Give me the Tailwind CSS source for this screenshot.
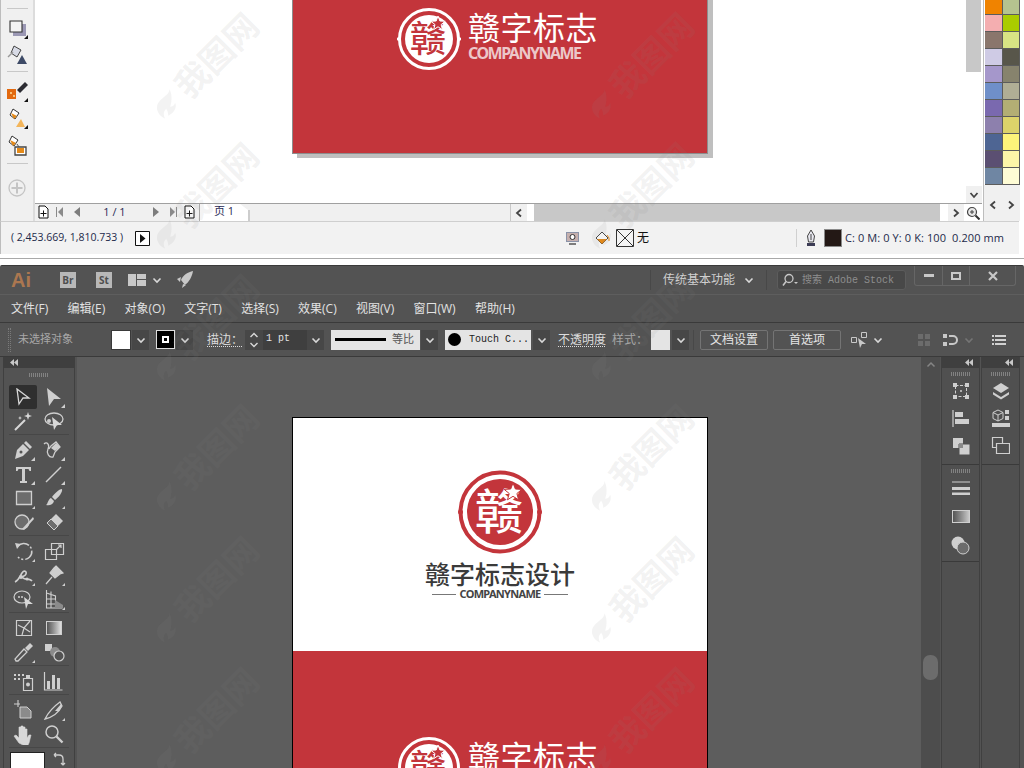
<!DOCTYPE html>
<html>
<head>
<meta charset="utf-8">
<script src="https://cdn.jsdelivr.net/npm/@tailwindcss/browser@4"></script>
</head>
<body class="w-[1024px] h-[768px] overflow-hidden bg-white relative font-['Open_Sans','Noto_Sans_CJK_SC',sans-serif]">

<!-- CorelDRAW window -->
<div class="h-[259px] border-b border-[#a8a8a8] flex flex-col">
  <div class="h-[221px] flex">
    <!-- left toolbox -->
    <div class="w-[35px] shrink-0 bg-[#f0f0f0] border-l border-[#bdbdbd] border-r-2 border-r-[#dcdcdc] flex flex-col items-center">
      <div class="w-[21px] h-[9px] border-b border-[#c8c8c8]"></div>
      <svg class="w-6 h-6 mt-[7px]" viewBox="0 0 24 24"><path d="M8 8h13v12H8z" fill="#9b98b4"/><path d="M5 5h12v11H5z" fill="#f4f4f4" stroke="#333" stroke-width="1.100"/><path d="M23 19v4h-4z" fill="#111"/></svg>
      <svg class="w-6 h-6 mt-[3px]" viewBox="0 0 24 24"><path d="M9 3l7 4-4 7-6-4z" fill="#d8dbe6" stroke="#444"/><path d="M3 14l5-5" stroke="#999" stroke-width="1.500"/><path d="M17 12l5 9H12z" fill="#3d4a66"/></svg>
      <div class="w-[21px] h-[5px] border-b border-[#c8c8c8]"></div>
      <svg class="w-6 h-6 mt-[7px]" viewBox="0 0 24 24"><path d="M2 10h9v10H2z" fill="#e2690f"/><path d="M5 13h2v2H5zM8 16h2v2H8z" fill="#f8c27a"/><path d="M12 11l8-8 3 3-8 8z" fill="#2c2c33"/><path d="M23 19v4h-4z" fill="#111"/></svg>
      <svg class="w-6 h-6 mt-[3px]" viewBox="0 0 24 24"><path d="M8 3l6 4-4 6-5-4z" fill="#fff" stroke="#333"/><path d="M6 7l6 3-3 3z" fill="#e58a18"/><path d="M16 13l4 8H11z" fill="#f3b55a"/><path d="M23 19v4h-4z" fill="#111"/></svg>
      <svg class="w-6 h-6 mt-[4px]" viewBox="0 0 24 24"><path d="M7 2l6 4-4 6-5-4z" fill="#fff" stroke="#333"/><path d="M5 6l6 3-3 3z" fill="#e58a18"/><path d="M10 13h11v8H10z" fill="#fff" stroke="#444" stroke-width="1.300"/><path d="M12 14h7v5h-7z" fill="#e58a18"/><path d="M12 10l2 3" stroke="#555"/></svg>
      <div class="w-[21px] h-[6px] border-b border-[#c8c8c8]"></div>
      <svg class="w-[18px] h-[18px] mt-[15px]" viewBox="0 0 18 18"><circle cx="9" cy="9" r="8" fill="none" stroke="#c4c4c4" stroke-width="1.300"/><path d="M9 3.500v11M3.500 9h11" stroke="#c4c4c4" stroke-width="2"/></svg>
    </div>
    <div class="flex-1 flex flex-col">
      <div class="h-[186px] flex">
        <!-- canvas -->
        <div class="flex-1 bg-white">
          <div class="ml-[257px] w-[416px] h-[154px] shadow-[5px_4px_0_#bfbfbf,5px_0_0_#bfbfbf] bg-[#c3353b] border border-[#8d8d8d] border-t-0 pt-[7px] pl-[104px] flex items-start gap-[7px]">
            <svg class="w-[64px] h-[64px] shrink-0" viewBox="0 0 64 64"><circle cx="32" cy="32" r="29.500" fill="none" stroke="#fff" stroke-width="3"/><circle cx="32" cy="32" r="24" fill="#fff"/><text x="31" y="45" text-anchor="middle" font-size="36" font-weight="500" fill="#c3353b" font-family="Noto Sans CJK SC">赣</text><path d="M41 9l1.900 5 5.300.3-4.100 3.300 1.400 5.100-4.500-2.900-4.400 2.900 1.400-5.100-4.100-3.300 5.300-.3z" fill="#c3353b" stroke="#fff" stroke-width="1"/><circle cx="1.600" cy="32" r="1.800" fill="#fff"/><circle cx="62.400" cy="32" r="1.800" fill="#fff"/></svg>
            <div class="flex flex-col">
              <div class="text-[32px] leading-[36px] text-white tracking-[0.5px] font-['Noto_Sans_CJK_SC',sans-serif] mt-[1px]">赣字标志</div>
              <div class="text-[16px] leading-[17px] font-bold text-[#ecc7c9] tracking-[-1.500px] font-['Noto_Sans',sans-serif] mt-[1px] whitespace-nowrap">COMPANYNAME</div>
            </div>
          </div>
        </div>
        <!-- vertical scroller -->
        <div class="w-[16px] flex flex-col bg-white">
          <div class="w-[15px] h-[72px] bg-[#c8c8c8]"></div>
        </div>
      </div>
      <div class="h-[17px] flex justify-end">
        <div class="w-[16px] bg-[#f0f0f0] text-[#444] flex items-center justify-center"><svg class="w-2.5 h-2.5" viewBox="0 0 10 10"><path d="M1.500 3l3.500 4 3.500-4" fill="none" stroke="currentColor" stroke-width="1.800"/></svg></div>
      </div>
      <!-- page tabs and horizontal scroller -->
      <div class="h-[18px] flex bg-[#f0f0f0] border-t border-[#a0a0a0] text-[#555]">
        <svg class="w-[13px] h-[14px] ml-[2px] mt-[1px]" viewBox="0 0 13 14"><path d="M2 1h6l3 3v9H2z" fill="#fff" stroke="#111"/><path d="M6.500 5.500v6M3.500 8.500h6" stroke="#111"/></svg>
        <svg class="w-[10px] h-[12px] ml-[5px] mt-[2px]" viewBox="0 0 10 12"><path d="M1.500 1v10" stroke="#8a8a8a"/><path d="M8 1v10L3 6z" fill="#8a8a8a"/></svg>
        <svg class="w-[8px] h-[12px] ml-[8px] mt-[2px]" viewBox="0 0 8 12"><path d="M7 1v10L1 6z" fill="#7d7d7d"/></svg>
        <div class="w-[61px] text-center text-[11px] leading-[16px] text-[#2a2a55] ml-[3px]">1 / 1</div>
        <svg class="w-[8px] h-[12px] ml-[7px] mt-[2px]" viewBox="0 0 8 12"><path d="M1 1v10l6-5z" fill="#7d7d7d"/></svg>
        <svg class="w-[10px] h-[12px] ml-[8px] mt-[2px]" viewBox="0 0 10 12"><path d="M8.500 1v10" stroke="#8a8a8a"/><path d="M2 1v10l5-5z" fill="#8a8a8a"/></svg>
        <svg class="w-[13px] h-[14px] ml-[5px] mt-[1px]" viewBox="0 0 13 14"><path d="M2 1h6l3 3v9H2z" fill="#fff" stroke="#111"/><path d="M6.500 5.500v6M3.500 8.500h6" stroke="#111"/></svg>
        <div class="relative w-[49px] h-[17px] ml-[3px] bg-white border-l border-[#aaa] text-[11px] leading-[14px] text-[#2a2a55] pl-[14px] [clip-path:polygon(0_0,84%_0,100%_35%,100%_100%,0_100%)]">页 1</div>
        <svg class="w-[2px] h-[17px]" viewBox="0 0 2 17"><path d="M1 6v11" stroke="#aaa"/></svg>
        <div class="flex-1"></div>
        <div class="w-[17px] flex items-center justify-center border-l border-[#c8c8c8] text-[#444]"><svg class="w-2.5 h-2.5" viewBox="0 0 10 10"><path d="M7 1.500L3 5l4 3.500" fill="none" stroke="currentColor" stroke-width="1.800"/></svg></div>
        <div class="w-[7px] bg-white"></div>
        <div class="w-[406px] bg-[#c8c8c8]"></div>
        <div class="w-[8px] bg-white"></div>
        <div class="w-[16px] flex items-center justify-center text-[#444]"><svg class="w-2.5 h-2.5" viewBox="0 0 10 10"><path d="M3 1.500L7 5 3 8.500" fill="none" stroke="currentColor" stroke-width="1.800"/></svg></div>
        <div class="w-[18px] bg-white flex items-center justify-center"><svg class="w-[14px] h-[14px]" viewBox="0 0 14 14"><circle cx="6" cy="6" r="4.500" fill="#e8e8e8" stroke="#444" stroke-width="1.200"/><path d="M4 6h4M6 4v4" stroke="#444"/><path d="M9.500 9.500l4 4" stroke="#333" stroke-width="2"/></svg></div>
      </div>
    </div>
    <!-- colour palette -->
    <div class="w-[41px] shrink-0 bg-white border-l border-[#bdbdbd] ml-[1px] flex flex-col">
      <div class="pl-[1px] pt-0">
        <div class="w-[35px] grid grid-cols-2 gap-px bg-[#5c5c5c] border-r border-b border-[#5c5c5c]">
          <div class="h-[14px] bg-[#f08300]"></div><div class="h-[14px] bg-[#b5c38f]"></div>
          <div class="h-4 bg-[#f4aeb0]"></div><div class="h-4 bg-[#aacc00]"></div>
          <div class="h-4 bg-[#8a766c]"></div><div class="h-4 bg-[#d8e484]"></div>
          <div class="h-4 bg-[#cfcbe5]"></div><div class="h-4 bg-[#58564a]"></div>
          <div class="h-4 bg-[#a597cb]"></div><div class="h-4 bg-[#87836d]"></div>
          <div class="h-4 bg-[#6f8fc9]"></div><div class="h-4 bg-[#b0ae95]"></div>
          <div class="h-4 bg-[#7a69af]"></div><div class="h-4 bg-[#b3ae74]"></div>
          <div class="h-4 bg-[#8d80ad]"></div><div class="h-4 bg-[#dcd36a]"></div>
          <div class="h-4 bg-[#4e6593]"></div><div class="h-4 bg-[#fdf47a]"></div>
          <div class="h-4 bg-[#5b4f72]"></div><div class="h-4 bg-[#fdf6a8]"></div>
          <div class="h-4 bg-[#6f86a3]"></div><div class="h-4 bg-[#fefcd5]"></div>
        </div>
      </div>
      <div class="w-[36px] flex-1 bg-[#f0f0f0] flex items-start justify-between px-[4px] pt-[15px] text-[#444]">
        <svg class="w-2.5 h-2.5" viewBox="0 0 10 10"><path d="M7 1.500L3 5l4 3.500" fill="none" stroke="currentColor" stroke-width="1.800"/></svg>
        <svg class="w-2.5 h-2.5" viewBox="0 0 10 10"><path d="M3 1.500L7 5 3 8.500" fill="none" stroke="currentColor" stroke-width="1.800"/></svg>
      </div>
    </div>
  </div>
  <!-- status bar -->
  <div class="h-[33px] w-[1019px] bg-[#f2f2f2] border-t border-[#cfcfcf] border-l border-l-[#bdbdbd] flex items-center text-[11px] text-[#1d2a4a]">
    <div class="w-[123px] ml-[10px] whitespace-nowrap text-[10.5px]">( 2,453.669, 1,810.733 )</div>
    <svg class="w-[15px] h-[15px] ml-[1px]" viewBox="0 0 15 15"><path d="M.500.500h14v14H.500z" fill="#fff" stroke="#111"/><path d="M5 3v9l5.500-4.500z" fill="#111"/></svg>
    <svg class="w-[15px] h-[15px] ml-[415px]" viewBox="0 0 15 15"><path d="M1 1h13v10H1z" fill="#8b93a8"/><path d="M2 2h11v8H2z" fill="#c6b0ae"/><circle cx="7.500" cy="6" r="2.500" fill="#fff" stroke="#333"/><path d="M4 13h7" stroke="#555" stroke-width="1.500"/></svg>
    <svg class="w-4 h-4 ml-[14px]" viewBox="0 0 16 16"><path d="M8 2l6 6-6 6-6-6z" fill="#fff" stroke="#444"/><path d="M3 9h10l-5 5z" fill="#e58a18"/><path d="M13 5l2 3v3" fill="none" stroke="#e58a18"/></svg>
    <svg class="w-[18px] h-[18px] ml-[6px]" viewBox="0 0 18 18"><path d="M.500.500h17v17H.500z" fill="#f4f4f4" stroke="#333"/><path d="M1 1l16 16M17 1L1 17" stroke="#333"/></svg>
    <div class="ml-[3px] text-[#111] text-[12px] w-[159px]">无</div>
    <div class="w-px h-[18px] bg-[#d0d0d0]"></div>
    <svg class="w-4 h-[18px] ml-[6px]" viewBox="0 0 16 18"><path d="M8 1l3.500 6-1 6h-5l-1-6z" fill="#e8e8f0" stroke="#444"/><path d="M8 5v6" stroke="#444"/><path d="M4 14h8v3H4z" fill="#3c3c55"/></svg>
    <div class="w-[18px] h-[18px] bg-[#231815] border border-[#8a8a8a] ml-[5px]"></div>
    <div class="ml-[3px] whitespace-nowrap text-[11px] tracking-[0.1px]">C: 0 M: 0 Y: 0 K: 100&nbsp; 0.200 mm</div>
  </div>
</div>

<!-- Illustrator window -->
<div class="mt-[6px] h-[503px] bg-[#535353] flex flex-col border-t border-[#3a3a3a] rounded-t-[2px] text-[#dcdcdc]">
  <div class="h-[28px] flex items-center">
    <div class="w-[22px] ml-[11px] text-[20px] leading-none font-bold text-[#ab7750] font-['Liberation_Sans',sans-serif]">Ai</div>
    <div class="w-4 h-4 ml-[27px] bg-[#b8b8b8] text-[#4e4e4e] text-[10px] leading-4 font-bold text-center">Br</div>
    <div class="w-4 h-4 ml-[20px] bg-[#b8b8b8] text-[#4e4e4e] text-[10px] leading-4 font-bold text-center">St</div>
    <svg class="w-[18px] h-[12px] ml-[16px]" viewBox="0 0 18 12"><path d="M0 0h8v12H0zM9 0h9v5H9zM9 6h9v6H9z" fill="#c8c8c8"/></svg>
    <svg class="w-2.5 h-2.5 ml-[6px]" viewBox="0 0 10 10"><path d="M1.500 3.500L5 7l3.500-3.500" fill="none" stroke="#d8d8d8" stroke-width="1.600"/></svg>
    <svg class="w-[18px] h-[18px] ml-[14px]" viewBox="0 0 18 18"><path d="M17 0C12 1 7 4 5 9l4 5c4-3 7-8 8-14zM1 8l4-2-1 5zM6 17l1-4 3 1z" fill="#c8c8c8"/></svg>
    <div class="w-px h-[20px] bg-[#484848] ml-[456px]"></div>
    <div class="ml-[12px] text-[12px] text-[#d0d0d0] w-[73px] whitespace-nowrap">传统基本功能</div>
    <svg class="w-2.5 h-2.5 ml-[8px]" viewBox="0 0 10 10"><path d="M1.500 3.500L5 7l3.500-3.500" fill="none" stroke="#d8d8d8" stroke-width="1.600"/></svg>
    <div class="w-px h-[20px] bg-[#484848] ml-[12px]"></div>
    <div class="w-[129px] h-[20px] ml-[10px] bg-[#484848] border border-[#5c5c5c] rounded-[3px] flex items-center gap-[4px] pl-[4px] text-[10px] text-[#8e8e8e] font-['Liberation_Mono','Noto_Sans_CJK_SC',monospace] whitespace-nowrap">
      <svg class="w-[16px] h-[14px]" viewBox="0 0 16 14"><circle cx="7" cy="5.500" r="4" fill="none" stroke="#c8c8c8" stroke-width="1.300"/><path d="M4 8.500L1 12.500" stroke="#c8c8c8" stroke-width="1.600"/><path d="M12 9h4l-2 2z" fill="#c8c8c8"/></svg>
      搜索 Adobe Stock
    </div>
    <div class="w-[102px] h-[20px] ml-[8px] -mt-[8px] border border-t-0 border-[#666] rounded-b-[3px] flex items-center text-[#c8c8c8]">
      <div class="w-[28px] h-full flex items-center justify-center border-r border-[#666]"><div class="w-[10px] h-[3px] bg-[#c8c8c8]"></div></div>
      <div class="w-[27px] h-full flex items-center justify-center border-r border-[#666]"><div class="w-[10px] h-[8px] border-2 border-[#c8c8c8]"></div></div>
      <div class="flex-1 flex items-center justify-center"><svg class="w-[10px] h-[10px]" viewBox="0 0 10 10"><path d="M1 1l8 8M9 1L1 9" stroke="#c8c8c8" stroke-width="2.200"/></svg></div>
    </div>
  </div>
  <!-- menu bar -->
  <div class="h-[28px] border-t border-[#5e5e5e] flex items-center pl-[11px] gap-[19.250px] text-[12px] text-[#e2e2e2] whitespace-nowrap">
    <span>文件(F)</span><span>编辑(E)</span><span>对象(O)</span><span>文字(T)</span><span>选择(S)</span><span>效果(C)</span><span>视图(V)</span><span>窗口(W)</span><span>帮助(H)</span>
  </div>
  <!-- control bar -->
  <div class="h-[35px] border-y border-[#3a3a3a] flex items-center text-[11px] whitespace-nowrap">
    <div class="w-[3px] h-[24px] ml-[8px] border-x border-dotted border-[#7a7a7a]"></div>
    <div class="ml-[7px] w-[93px] text-[#a8a8a8] text-[11px]">未选择对象</div>
    <div class="w-[20px] h-[20px] bg-white border border-[#3a3a3a]"></div>
    <div class="w-[17px] h-[20px] ml-px bg-[#474747] flex items-center justify-center"><svg class="w-2.5 h-2.5" viewBox="0 0 10 10"><path d="M1.500 3.500L5 7l3.500-3.500" fill="none" stroke="#d8d8d8" stroke-width="1.600"/></svg></div>
    <div class="w-[19px] h-[19px] ml-[7px] bg-black border border-[#ddd] flex items-center justify-center"><div class="w-[3px] h-[3px] border-2 border-white box-content"></div></div>
    <div class="w-[17px] h-[20px] ml-px bg-[#474747] flex items-center justify-center"><svg class="w-2.5 h-2.5" viewBox="0 0 10 10"><path d="M1.500 3.500L5 7l3.500-3.500" fill="none" stroke="#d8d8d8" stroke-width="1.600"/></svg></div>
    <div class="ml-[14px] w-[38px] text-[#dcdcdc] text-[12px] leading-[14px] underline decoration-dotted underline-offset-2">描边：</div>
    <div class="w-[18px] h-[20px] bg-[#474747] flex flex-col items-center justify-center gap-[2px]">
      <svg class="w-2.5 h-[7px]" viewBox="0 0 10 7"><path d="M1.500 5L5 1.500 8.500 5" fill="none" stroke="#d8d8d8" stroke-width="1.400"/></svg>
      <svg class="w-2.5 h-[7px]" viewBox="0 0 10 7"><path d="M1.500 2L5 5.500 8.500 2" fill="none" stroke="#d8d8d8" stroke-width="1.400"/></svg>
    </div>
    <div class="w-[44px] h-[20px] bg-[#3f3f3f] pl-[3px] text-[10px] leading-[18px] text-[#e4e4e4] font-['Liberation_Mono',monospace]">1 pt</div>
    <div class="w-[17px] h-[20px] bg-[#474747] flex items-center justify-center"><svg class="w-2.5 h-2.5" viewBox="0 0 10 10"><path d="M1.500 3.500L5 7l3.500-3.500" fill="none" stroke="#d8d8d8" stroke-width="1.600"/></svg></div>
    <div class="w-[89px] h-[20px] ml-[7px] bg-[#e4e4e4] flex items-center text-[#555] text-[11px]"><div class="w-[51px] h-[3px] ml-[4px] bg-black"></div><span class="ml-[6px]">等比</span></div>
    <div class="w-[17px] h-[20px] ml-px bg-[#474747] flex items-center justify-center"><svg class="w-2.5 h-2.5" viewBox="0 0 10 10"><path d="M1.500 3.500L5 7l3.500-3.500" fill="none" stroke="#d8d8d8" stroke-width="1.600"/></svg></div>
    <div class="w-[86px] h-[20px] ml-[7px] bg-[#e4e4e4] flex items-center text-[#222] text-[10px] font-['Liberation_Mono',monospace]"><div class="w-[13px] h-[13px] ml-[3px] rounded-full bg-black"></div><span class="ml-[8px]">Touch C...</span></div>
    <div class="w-[17px] h-[20px] ml-[2px] bg-[#474747] flex items-center justify-center"><svg class="w-2.5 h-2.5" viewBox="0 0 10 10"><path d="M1.500 3.500L5 7l3.500-3.500" fill="none" stroke="#d8d8d8" stroke-width="1.600"/></svg></div>
    <div class="ml-[8px] w-[48px] text-[#dcdcdc] text-[12px] leading-[14px] underline decoration-dotted underline-offset-2">不透明度</div>
    <div class="ml-[6px] w-[39px] text-[#a8a8a8] text-[12px]">样式：</div>
    <div class="w-[19px] h-[20px] bg-[#e4e4e4]"></div>
    <div class="w-[17px] h-[20px] ml-[2px] bg-[#474747] flex items-center justify-center"><svg class="w-2.5 h-2.5" viewBox="0 0 10 10"><path d="M1.500 3.500L5 7l3.500-3.500" fill="none" stroke="#d8d8d8" stroke-width="1.600"/></svg></div>
    <div class="w-px h-[20px] bg-[#484848] ml-[4px]"></div>
    <div class="w-[68px] h-[20px] ml-[6px] border border-[#747474] rounded-[2px] text-center text-[12px] leading-[18px] text-[#e4e4e4]">文档设置</div>
    <div class="w-[68px] h-[20px] ml-[5px] border border-[#747474] rounded-[2px] text-center text-[12px] leading-[18px] text-[#e4e4e4]">首选项</div>
    <svg class="w-[18px] h-[18px] ml-[9px]" viewBox="0 0 18 18"><path d="M1.500 6.500h5v5h-5zM11.500 1.500h5v5h-5z" fill="none" stroke="#c8c8c8"/><path d="M8 7l8 6h-4l-2 4z" fill="#c8c8c8"/></svg>
    <svg class="w-2.5 h-2.5 ml-[5px]" viewBox="0 0 10 10"><path d="M1.500 3.500L5 7l3.500-3.500" fill="none" stroke="#d8d8d8" stroke-width="1.600"/></svg>
    <svg class="w-[14px] h-[14px] ml-[34px]" viewBox="0 0 14 14"><path d="M1 1h5v5H1zM8 1h5v5H8zM1 8h5v5H1zM8 8h5v5H8z" fill="#6c6c6c"/></svg>
    <svg class="w-[16px] h-[14px] ml-[12px]" viewBox="0 0 16 14"><path d="M0 1h4v4H0zM0 9h4v4H0z" fill="#c8c8c8"/><path d="M6 3h4a4 4 0 0 1 0 8H6" fill="none" stroke="#c8c8c8" stroke-width="2"/></svg>
    <svg class="w-2.5 h-2.5 ml-[5px]" viewBox="0 0 10 10"><path d="M1.500 3.500L5 7l3.500-3.500" fill="none" stroke="#757575" stroke-width="1.600"/></svg>
    <svg class="w-[14px] h-[12px] ml-[18px]" viewBox="0 0 14 12"><path d="M0 1h2v2H0zM0 5h2v2H0zM0 9h2v2H0zM3 1h11v2H3zM3 5h11v2H3zM3 9h11v2H3z" fill="#d0d0d0"/></svg>
  </div>
  <!-- workspace -->
  <div class="flex-1 flex min-h-0">
    <!-- tools -->
    <div class="w-[77px] shrink-0 pl-[3px] bg-[#535353]">
      <div class="w-[72px] h-[11px] bg-[#3f3f3f] flex items-center pl-[7px]"><svg class="w-2 h-[7px]" viewBox="0 0 8 7"><path d="M4 0v7L0 3.500zM8 0v7L4 3.500z" fill="#c8c8c8"/></svg></div>
      <div class="w-[72px] h-[401px] border-x border-[#404040] text-[#cfcfcf] overflow-hidden">
        <div class="w-[20px] h-[4px] mx-auto mt-[5px] mb-[8px] [background:repeating-linear-gradient(90deg,#828282_0_1px,transparent_1px_2px)]"></div>
        <div class="grid grid-cols-2 w-[60px] mx-auto border-b border-[#474747] pb-[1px] mb-[3px] ml-[5px]">
          <div class="h-6 flex items-center justify-center bg-[#2f2f2f] rounded-[2px] w-[28px]"><svg class="w-[18px] h-[18px]" viewBox="0 0 18 18"><path d="M3 1l12 9H9l-4 6z" fill="none" stroke="#d8d8d8" stroke-width="1.300"/></svg></div>
          <div class="h-6 flex items-center justify-center"><svg class="w-[22px] h-[22px]" viewBox="0 0 22 22"><path d="M4 2l14 11h-7l-5 7z" fill="#cfcfcf"/><path d="M22 22v-4l-4 4z" fill="#cfcfcf"/></svg></div>
          <div class="h-6 flex items-center justify-center"><svg class="w-[22px] h-[22px]" viewBox="0 0 22 22"><path d="M2 20L12 10" stroke="#d8d8d8" stroke-width="2"/><path d="M15 2l1 3 3 1-3 1-1 3-1-3-3-1 3-1zM7 6l.6 1.500L9 8l-1.400.6L7 10l-.6-1.400L5 8l1.400-.5z" fill="#d8d8d8"/></svg></div>
          <div class="h-6 flex items-center justify-center"><svg class="w-[22px] h-[22px]" viewBox="0 0 22 22"><ellipse cx="11" cy="9" rx="9" ry="6" fill="none" stroke="#cfcfcf" stroke-width="1.300"/><path d="M9 7l10 8h-5l-3 5z" fill="#d8d8d8"/><circle cx="6" cy="11" r="2" fill="#cfcfcf"/></svg></div>
        </div>
        <div class="grid grid-cols-2 w-[60px] ml-[5px] border-b border-[#474747] pb-[1px] mb-[3px]">
          <div class="h-6 flex items-center justify-center"><svg class="w-[22px] h-[22px]" viewBox="0 0 22 22"><path d="M2 20l2-9 6-6 6 6-6 6z" fill="#cfcfcf"/><path d="M11 4l2-2 6 6-2 2z" fill="#cfcfcf"/><circle cx="8" cy="13" r="1.500" fill="#535353"/><path d="M22 22v-4l-4 4z" fill="#cfcfcf"/></svg></div>
          <div class="h-6 flex items-center justify-center"><svg class="w-[22px] h-[22px]" viewBox="0 0 22 22"><path d="M1 5c3-3 6 1 4 5s1 9 5 8l2-5 5-5-4-5-5 4-2 3" fill="none" stroke="#cfcfcf" stroke-width="1.300"/><path d="M12 12l5-4-4-4-5 5z" fill="#cfcfcf"/><path d="M22 22v-4l-4 4z" fill="#cfcfcf"/></svg></div>
          <div class="h-6 flex items-center justify-center"><svg class="w-[22px] h-[22px]" viewBox="0 0 22 22"><path d="M3 4h15v4h-1.500l-1-2H12v12h2v2H7v-2h2V6H5.500l-1 2H3z" fill="#cfcfcf"/><path d="M22 22v-4l-4 4z" fill="#cfcfcf"/></svg></div>
          <div class="h-6 flex items-center justify-center"><svg class="w-[22px] h-[22px]" viewBox="0 0 22 22"><path d="M3 19L18 4" stroke="#cfcfcf" stroke-width="1.400"/><path d="M22 22v-4l-4 4z" fill="#cfcfcf"/></svg></div>
          <div class="h-6 flex items-center justify-center"><svg class="w-[22px] h-[22px]" viewBox="0 0 22 22"><path d="M3.500 4.500h15v13h-15z" fill="#6d6d6d" stroke="#cfcfcf" stroke-width="1.300"/><path d="M22 22v-3l-3 3z" fill="#cfcfcf"/></svg></div>
          <div class="h-6 flex items-center justify-center"><svg class="w-[22px] h-[22px]" viewBox="0 0 22 22"><path d="M19 2c1 3-4 9-7 11l-3-3c2-3 7-8 10-8z" fill="#cfcfcf"/><path d="M8 11l3 3c-1 4-5 5-8 4 2-1 2-6 5-7z" fill="#cfcfcf"/><path d="M22 22v-3l-3 3z" fill="#cfcfcf"/></svg></div>
          <div class="h-6 flex items-center justify-center"><svg class="w-[22px] h-[22px]" viewBox="0 0 22 22"><circle cx="9" cy="11" r="7" fill="#6d6d6d" stroke="#cfcfcf" stroke-width="1.300"/><path d="M9 18L20 6l1 2-10 11z" fill="#cfcfcf"/></svg></div>
          <div class="h-6 flex items-center justify-center"><svg class="w-[22px] h-[22px]" viewBox="0 0 22 22"><path d="M13 3l7 7-9 9-7-7z" fill="#cfcfcf"/><path d="M8 8l7 7-4 4-7-7z" fill="#6d6d6d" stroke="#cfcfcf"/></svg></div>
        </div>
        <div class="grid grid-cols-2 w-[60px] ml-[5px] border-b border-[#474747] pb-[1px] mb-[3px]">
          <div class="h-6 flex items-center justify-center"><svg class="w-[22px] h-[22px]" viewBox="0 0 22 22"><path d="M5 6a8 8 0 1 1 0 11" fill="none" stroke="#cfcfcf" stroke-width="1.500" stroke-dasharray="12 2 2 2"/><path d="M2 3l6 1-4 5z" fill="#cfcfcf"/><path d="M22 22v-3l-3 3z" fill="#cfcfcf"/></svg></div>
          <div class="h-6 flex items-center justify-center"><svg class="w-[22px] h-[22px]" viewBox="0 0 22 22"><path d="M8.500 3.500h12v11h-12zM2.500 9.500h11v10h-11z" fill="none" stroke="#cfcfcf" stroke-width="1.200"/><path d="M13 10l5-5M15 5h3v3" fill="none" stroke="#cfcfcf" stroke-width="1.200"/></svg></div>
          <div class="h-6 flex items-center justify-center"><svg class="w-[22px] h-[22px]" viewBox="0 0 22 22"><path d="M2 18c4-2 5-6 7-9s5-2 4 1-5 2-3 4 7 0 9 3" fill="none" stroke="#cfcfcf" stroke-width="1.600"/><circle cx="8" cy="13" r="2" fill="#cfcfcf"/><circle cx="14" cy="15" r="1.500" fill="#cfcfcf"/><path d="M22 22v-3l-3 3z" fill="#cfcfcf"/></svg></div>
          <div class="h-6 flex items-center justify-center"><svg class="w-[22px] h-[22px]" viewBox="0 0 22 22"><path d="M13 2l7 7-3 1-5 4-5-5 4-5zM9 13l-6 7" fill="#cfcfcf" stroke="#cfcfcf" stroke-width="1.200"/><path d="M22 22v-3l-3 3z" fill="#cfcfcf"/></svg></div>
          <div class="h-6 flex items-center justify-center"><svg class="w-[22px] h-[22px]" viewBox="0 0 22 22"><ellipse cx="9" cy="9" rx="8" ry="6" fill="none" stroke="#cfcfcf" stroke-width="1.200"/><circle cx="6" cy="9" r="1" fill="#cfcfcf"/><circle cx="9" cy="9" r="1" fill="#cfcfcf"/><path d="M11 9l9 7h-5l-2 5z" fill="#d8d8d8"/></svg></div>
          <div class="h-6 flex items-center justify-center"><svg class="w-[22px] h-[22px]" viewBox="0 0 22 22"><path d="M3.500 2v18h16M3.500 5l9 3v12M3.500 11l9 0M3.500 16h9M8 3.500V20" fill="none" stroke="#cfcfcf" stroke-width="1.100"/><path d="M12 12l8 5v3h-8z" fill="#8b8b8b"/><path d="M22 22v-3l-3 3z" fill="#cfcfcf"/></svg></div>
        </div>
        <div class="grid grid-cols-2 w-[60px] ml-[5px] border-b border-[#474747] pb-[1px] mb-[3px]">
          <div class="h-6 flex items-center justify-center"><svg class="w-[22px] h-[22px]" viewBox="0 0 22 22"><path d="M3.500 3.500h15v15h-15zM5 8l6 3 6-7M11 11l-2 7M11 11l6 4" fill="none" stroke="#cfcfcf" stroke-width="1.200"/></svg></div>
          <div class="h-6 flex items-center justify-center"><div class="w-4 h-[14px] bg-gradient-to-r from-[#555] to-[#e0e0e0] border border-[#cfcfcf]"></div></div>
          <div class="h-6 flex items-center justify-center"><svg class="w-[22px] h-[22px]" viewBox="0 0 22 22"><path d="M3 20l-1-2 9-10 3 3-9 9z" fill="none" stroke="#cfcfcf" stroke-width="1.300"/><path d="M12 7l5-5 3 3-5 5z" fill="#cfcfcf"/><path d="M22 22v-3l-3 3z" fill="#cfcfcf"/></svg></div>
          <div class="h-6 flex items-center justify-center"><svg class="w-[22px] h-[22px]" viewBox="0 0 22 22"><path d="M2 3h7v7H2z" fill="#cfcfcf"/><circle cx="12" cy="11" r="5" fill="#8b8b8b"/><circle cx="16" cy="15" r="5" fill="#535353" stroke="#cfcfcf" stroke-width="1.200"/></svg></div>
        </div>
        <div class="grid grid-cols-2 w-[60px] ml-[5px] border-b border-[#474747] pb-[1px] mb-[3px]">
          <div class="h-6 flex items-center justify-center"><svg class="w-[22px] h-[22px]" viewBox="0 0 22 22"><path d="M1 4h2v2H1zM5 4h2v2H5zM9 4h2v2H9zM1 8h2v2H1zM5 8h2v2H5z" fill="#cfcfcf"/><path d="M10.500 8.500h9v12h-9z" fill="none" stroke="#cfcfcf" stroke-width="1.200"/><path d="M13 5h4v3h-4z" fill="#cfcfcf"/><circle cx="15" cy="14.500" r="2" fill="#cfcfcf"/></svg></div>
          <div class="h-6 flex items-center justify-center"><svg class="w-[22px] h-[22px]" viewBox="0 0 22 22"><path d="M1.500 2v18h18" fill="none" stroke="#cfcfcf" stroke-width="1.200"/><path d="M4 11h3v8H4zM9 5h3v14H9zM14 8h3v11h-3z" fill="#cfcfcf"/></svg></div>
        </div>
        <div class="grid grid-cols-2 w-[60px] ml-[5px] border-b border-[#474747] pb-[1px] mb-[3px]">
          <div class="h-6 flex items-center justify-center"><svg class="w-[22px] h-[22px]" viewBox="0 0 22 22"><path d="M1 5h6M5 1v7" stroke="#cfcfcf" stroke-width="1.100"/><path d="M7 8h7l4 4v7H7z" fill="#8b8b8b" stroke="#cfcfcf"/></svg></div>
          <div class="h-6 flex items-center justify-center"><svg class="w-[22px] h-[22px]" viewBox="0 0 22 22"><path d="M2 20c3-6 8-12 15-17l2 4c-3 6-9 11-17 13z" fill="none" stroke="#cfcfcf" stroke-width="1.300"/><path d="M12 12l6-7 1 2-3 5z" fill="#cfcfcf"/><path d="M22 22v-3l-3 3z" fill="#cfcfcf"/></svg></div>
          <div class="h-6 flex items-center justify-center"><svg class="w-[22px] h-[22px]" viewBox="0 0 22 22"><path d="M6 20l-5-7 2-1 3 3V4h2v7-8h2v8-7h2v7-5h2v9l2-3h2l-2 8-2 4z" fill="#d8d8d8" stroke="#d8d8d8" stroke-width=".6"/></svg></div>
          <div class="h-6 flex items-center justify-center"><svg class="w-[22px] h-[22px]" viewBox="0 0 22 22"><circle cx="9" cy="9" r="6" fill="none" stroke="#cfcfcf" stroke-width="1.500"/><path d="M13.500 13.500l6 6" stroke="#cfcfcf" stroke-width="2.400"/></svg></div>
        </div>
        <div class="flex ml-[6px] pt-[1px]">
          <div class="w-[35px] h-[20px] bg-white border border-[#222]"></div>
          <svg class="w-4 h-4 ml-[6px]" viewBox="0 0 16 16"><path d="M3 3h5M3 3l2-2M3 3l2 2M12 13V7M12 13l-2-2M12 13l2-2M8 3c2 0 4 1 4 4" fill="none" stroke="#cfcfcf" stroke-width="1.300"/></svg>
        </div>
      </div>
    </div>
    <!-- document canvas -->
    <div class="flex-1 bg-[#5d5d5d] overflow-hidden pl-[215px] pt-[60px]">
      <div class="w-[416px] h-[500px] border border-black border-b-0 bg-white">
        <div class="h-[233px] flex flex-col items-center pt-[52px]">
          <svg class="w-[84px] h-[84px] shrink-0" viewBox="0 0 84 84"><circle cx="42" cy="42" r="39.500" fill="none" stroke="#c3353b" stroke-width="4"/><circle cx="42" cy="42" r="33" fill="#c3353b"/><circle cx="2.500" cy="42" r="2.500" fill="#c3353b"/><circle cx="81.500" cy="42" r="2.500" fill="#c3353b"/><text x="41" y="59" text-anchor="middle" font-size="48" font-weight="500" fill="#fff" font-family="Noto Sans CJK SC">赣</text><path d="M55 13l2.400 6 6.500.4-5 4.100 1.700 6.300-5.600-3.500-5.500 3.500 1.700-6.300-5-4.100 6.500-.4z" fill="#fff" stroke="#c3353b" stroke-width="1"/></svg>
          <div class="text-[25px] leading-[30px] font-medium text-[#3a3a3a] mt-[4px] font-['Noto_Sans_CJK_SC',sans-serif] whitespace-nowrap">赣字标志设计</div>
          <div class="flex items-center gap-[3px] text-[11px] leading-[12px] font-bold text-[#444] tracking-[-0.700px] font-['Noto_Sans',sans-serif]">
            <div class="w-[24px] h-px bg-[#777]"></div>COMPANYNAME<div class="w-[24px] h-px bg-[#777]"></div>
          </div>
        </div>
        <div class="h-[300px] bg-[#c3353b] pt-[85px] pl-[104px] flex items-start gap-[7px]">
          <svg class="w-[64px] h-[64px] shrink-0" viewBox="0 0 64 64"><circle cx="32" cy="32" r="29.500" fill="none" stroke="#fff" stroke-width="3"/><circle cx="32" cy="32" r="24" fill="#fff"/><text x="31" y="45" text-anchor="middle" font-size="36" font-weight="500" fill="#c3353b" font-family="Noto Sans CJK SC">赣</text><path d="M41 9l1.900 5 5.300.3-4.100 3.300 1.400 5.100-4.500-2.900-4.400 2.900 1.400-5.100-4.100-3.300 5.300-.3z" fill="#c3353b" stroke="#fff" stroke-width="1"/></svg>
          <div class="text-[32px] leading-[36px] text-white tracking-[0.5px] font-['Noto_Sans_CJK_SC',sans-serif] mt-[1px] whitespace-nowrap">赣字标志</div>
        </div>
      </div>
    </div>
    <!-- vertical scrollbar -->
    <div class="w-[19px] shrink-0 bg-[#4d4d4d] flex flex-col items-center">
      <svg class="w-2.5 h-2.5 mt-[3px]" viewBox="0 0 10 10"><path d="M1.500 6.500L5 3l3.500 3.500" fill="none" stroke="#858585" stroke-width="1.500"/></svg>
      <div class="w-[15px] h-[25px] mt-[285px] bg-[#6c6c6c] rounded-[7px]"></div>
    </div>
    <!-- right panels -->
    <div class="w-[39px] ml-[1px] shrink-0 border-x border-[#404040] bg-[#505050] flex flex-col items-center">
      <div class="w-full h-[11px] bg-[#3f3f3f] flex items-center justify-end pr-[6px]"><svg class="w-2 h-[7px]" viewBox="0 0 8 7"><path d="M4 0v7L0 3.500zM8 0v7L4 3.500z" fill="#c8c8c8"/></svg></div>
      <div class="w-full h-[97px] border-b border-[#3a3a3a] flex flex-col items-center">
        <div class="w-[20px] h-[4px] mt-[4px] [background:repeating-linear-gradient(90deg,#828282_0_1px,transparent_1px_2px)]"></div>
        <svg class="w-[18px] h-[18px] mt-[6px]" viewBox="0 0 18 18"><path d="M3.500 3.500h11v11h-11z" fill="none" stroke="#cfcfcf" stroke-dasharray="3 1.500"/><path d="M1 1h4v4H1zM13 1h4v4h-4zM1 13h4v4H1zM13 13h4v4h-4z" fill="#cfcfcf"/><circle cx="9" cy="9" r="1" fill="#cfcfcf"/></svg>
        <svg class="w-[18px] h-[18px] mt-[9px]" viewBox="0 0 18 18"><path d="M1 1v17" stroke="#cfcfcf" stroke-width="1.200"/><path d="M3 3h8v5H3zM3 10h14v5H3z" fill="#cfcfcf"/></svg>
        <svg class="w-[18px] h-[18px] mt-[10px]" viewBox="0 0 18 18"><path d="M1 1h10v10H1z" fill="#cfcfcf"/><path d="M7 7h11v11H7z" fill="#cfcfcf" stroke="#505050"/><path d="M7 7h4v4H7z" fill="#8a8a8a"/></svg>
      </div>
      <div class="w-full h-[97px] border-b border-[#3a3a3a] flex flex-col items-center">
        <div class="w-[20px] h-[4px] mt-[4px] [background:repeating-linear-gradient(90deg,#828282_0_1px,transparent_1px_2px)]"></div>
        <svg class="w-[18px] h-[14px] mt-[8px]" viewBox="0 0 18 14"><path d="M0 1h18M0 6.500h18v2H0zM0 12h18v2H0z" fill="#cfcfcf" stroke="#cfcfcf"/></svg>
        <div class="w-[18px] h-[13px] mt-[15px] bg-gradient-to-r from-[#555] to-[#c8c8c8] border border-[#cfcfcf]"></div>
        <svg class="w-[19px] h-[19px] mt-[13px]" viewBox="0 0 19 19"><circle cx="7" cy="7" r="6.500" fill="#cfcfcf"/><circle cx="12" cy="12" r="6" fill="#6c6c6c" stroke="#cfcfcf"/></svg>
      </div>
    </div>
    <div class="w-[39px] ml-[1px] shrink-0 border-x border-[#404040] bg-[#505050] flex flex-col items-center">
      <div class="w-full h-[11px] bg-[#3f3f3f] flex items-center justify-end pr-[6px]"><svg class="w-2 h-[7px]" viewBox="0 0 8 7"><path d="M4 0v7L0 3.500zM8 0v7L4 3.500z" fill="#c8c8c8"/></svg></div>
      <div class="w-full h-[97px] border-b border-[#3a3a3a] flex flex-col items-center">
        <div class="w-[20px] h-[4px] mt-[4px] [background:repeating-linear-gradient(90deg,#828282_0_1px,transparent_1px_2px)]"></div>
        <svg class="w-[18px] h-[18px] mt-[6px]" viewBox="0 0 18 18"><path d="M9 1l8 5-8 5-8-5z" fill="#cfcfcf"/><path d="M1 10l8 5 8-5v2.500l-8 5-8-5z" fill="#cfcfcf"/></svg>
        <svg class="w-[18px] h-[18px] mt-[9px]" viewBox="0 0 18 18"><path d="M6 1l5 2.500v6L6 12 1 9.500v-6z" fill="none" stroke="#cfcfcf"/><path d="M1 3.500L6 6l5-2.500M6 6v6" fill="none" stroke="#cfcfcf"/><path d="M13 1h4v4h-4zM13 7h4v4h-4zM0 14h18v4H0z" fill="#cfcfcf"/></svg>
        <svg class="w-[19px] h-[19px] mt-[9px]" viewBox="0 0 19 19"><path d="M1.500 1.500h10v10h-10z" fill="none" stroke="#cfcfcf" stroke-width="1.200"/><path d="M5.500 7.500h13v10h-13z" fill="#505050" stroke="#cfcfcf" stroke-width="1.200"/></svg>
      </div>
    </div>
    <div class="w-[4px] bg-[#535353]"></div>
  </div>
</div>

<!-- watermark overlay -->
<div class="absolute inset-0 pointer-events-none overflow-hidden text-[#858585]/10 font-['Noto_Sans_CJK_SC',sans-serif] font-bold text-[34px] leading-[38px]">
  <div class="absolute left-[135px] top-[41px] w-[150px] h-[38px] -rotate-45 flex items-center gap-[6px]"><svg class="w-[26px] h-[30px] shrink-0 rotate-45" viewBox="0 0 26 30"><path d="M16 0c2 6-10 9-12 17-1 5 2 10 8 13-2-4-2-7 1-10 2 3 2 5 2 7 6-3 9-8 7-13-1 3-3 4-5 4 2-6 2-13-1-18z" fill="currentColor"/></svg><span class="whitespace-nowrap">我图网</span></div>
  <div class="absolute left-[570px] top-[41px] w-[150px] h-[38px] -rotate-45 flex items-center gap-[6px]"><svg class="w-[26px] h-[30px] shrink-0 rotate-45" viewBox="0 0 26 30"><path d="M16 0c2 6-10 9-12 17-1 5 2 10 8 13-2-4-2-7 1-10 2 3 2 5 2 7 6-3 9-8 7-13-1 3-3 4-5 4 2-6 2-13-1-18z" fill="currentColor"/></svg><span class="whitespace-nowrap">我图网</span></div>
  <div class="absolute left-[135px] top-[171px] w-[150px] h-[38px] -rotate-45 flex items-center gap-[6px]"><svg class="w-[26px] h-[30px] shrink-0 rotate-45" viewBox="0 0 26 30"><path d="M16 0c2 6-10 9-12 17-1 5 2 10 8 13-2-4-2-7 1-10 2 3 2 5 2 7 6-3 9-8 7-13-1 3-3 4-5 4 2-6 2-13-1-18z" fill="currentColor"/></svg><span class="whitespace-nowrap">我图网</span></div>
  <div class="absolute left-[570px] top-[171px] w-[150px] h-[38px] -rotate-45 flex items-center gap-[6px]"><svg class="w-[26px] h-[30px] shrink-0 rotate-45" viewBox="0 0 26 30"><path d="M16 0c2 6-10 9-12 17-1 5 2 10 8 13-2-4-2-7 1-10 2 3 2 5 2 7 6-3 9-8 7-13-1 3-3 4-5 4 2-6 2-13-1-18z" fill="currentColor"/></svg><span class="whitespace-nowrap">我图网</span></div>
  <div class="absolute left-[135px] top-[303px] w-[150px] h-[38px] -rotate-45 flex items-center gap-[6px]"><svg class="w-[26px] h-[30px] shrink-0 rotate-45" viewBox="0 0 26 30"><path d="M16 0c2 6-10 9-12 17-1 5 2 10 8 13-2-4-2-7 1-10 2 3 2 5 2 7 6-3 9-8 7-13-1 3-3 4-5 4 2-6 2-13-1-18z" fill="currentColor"/></svg><span class="whitespace-nowrap">我图网</span></div>
  <div class="absolute left-[570px] top-[303px] w-[150px] h-[38px] -rotate-45 flex items-center gap-[6px]"><svg class="w-[26px] h-[30px] shrink-0 rotate-45" viewBox="0 0 26 30"><path d="M16 0c2 6-10 9-12 17-1 5 2 10 8 13-2-4-2-7 1-10 2 3 2 5 2 7 6-3 9-8 7-13-1 3-3 4-5 4 2-6 2-13-1-18z" fill="currentColor"/></svg><span class="whitespace-nowrap">我图网</span></div>
  <div class="absolute left-[135px] top-[433px] w-[150px] h-[38px] -rotate-45 flex items-center gap-[6px]"><svg class="w-[26px] h-[30px] shrink-0 rotate-45" viewBox="0 0 26 30"><path d="M16 0c2 6-10 9-12 17-1 5 2 10 8 13-2-4-2-7 1-10 2 3 2 5 2 7 6-3 9-8 7-13-1 3-3 4-5 4 2-6 2-13-1-18z" fill="currentColor"/></svg><span class="whitespace-nowrap">我图网</span></div>
  <div class="absolute left-[570px] top-[433px] w-[150px] h-[38px] -rotate-45 flex items-center gap-[6px]"><svg class="w-[26px] h-[30px] shrink-0 rotate-45" viewBox="0 0 26 30"><path d="M16 0c2 6-10 9-12 17-1 5 2 10 8 13-2-4-2-7 1-10 2 3 2 5 2 7 6-3 9-8 7-13-1 3-3 4-5 4 2-6 2-13-1-18z" fill="currentColor"/></svg><span class="whitespace-nowrap">我图网</span></div>
  <div class="absolute left-[135px] top-[565px] w-[150px] h-[38px] -rotate-45 flex items-center gap-[6px]"><svg class="w-[26px] h-[30px] shrink-0 rotate-45" viewBox="0 0 26 30"><path d="M16 0c2 6-10 9-12 17-1 5 2 10 8 13-2-4-2-7 1-10 2 3 2 5 2 7 6-3 9-8 7-13-1 3-3 4-5 4 2-6 2-13-1-18z" fill="currentColor"/></svg><span class="whitespace-nowrap">我图网</span></div>
  <div class="absolute left-[570px] top-[565px] w-[150px] h-[38px] -rotate-45 flex items-center gap-[6px]"><svg class="w-[26px] h-[30px] shrink-0 rotate-45" viewBox="0 0 26 30"><path d="M16 0c2 6-10 9-12 17-1 5 2 10 8 13-2-4-2-7 1-10 2 3 2 5 2 7 6-3 9-8 7-13-1 3-3 4-5 4 2-6 2-13-1-18z" fill="currentColor"/></svg><span class="whitespace-nowrap">我图网</span></div>
  <div class="absolute left-[135px] top-[696px] w-[150px] h-[38px] -rotate-45 flex items-center gap-[6px]"><svg class="w-[26px] h-[30px] shrink-0 rotate-45" viewBox="0 0 26 30"><path d="M16 0c2 6-10 9-12 17-1 5 2 10 8 13-2-4-2-7 1-10 2 3 2 5 2 7 6-3 9-8 7-13-1 3-3 4-5 4 2-6 2-13-1-18z" fill="currentColor"/></svg><span class="whitespace-nowrap">我图网</span></div>
  <div class="absolute left-[570px] top-[696px] w-[150px] h-[38px] -rotate-45 flex items-center gap-[6px]"><svg class="w-[26px] h-[30px] shrink-0 rotate-45" viewBox="0 0 26 30"><path d="M16 0c2 6-10 9-12 17-1 5 2 10 8 13-2-4-2-7 1-10 2 3 2 5 2 7 6-3 9-8 7-13-1 3-3 4-5 4 2-6 2-13-1-18z" fill="currentColor"/></svg><span class="whitespace-nowrap">我图网</span></div>
</div>
</body>
</html>
